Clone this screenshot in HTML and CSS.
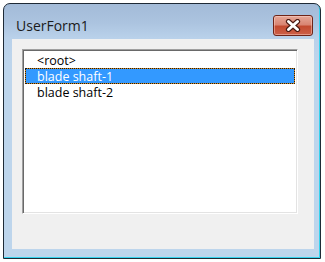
FILE: index.html
```html
<!DOCTYPE html>
<html>
<head>
<meta charset="utf-8">
<link rel="stylesheet" href="styles.css">
</head>
<body>
<div class="window">
  <div class="titlebar">
    <span class="title">UserForm1</span>
    <button class="close" aria-label="Close">
      <svg width="16" height="13" viewBox="0 0 16 13">
        <path d="M3.5 2.5 L12.5 10.5 M12.5 2.5 L3.5 10.5" stroke="#4a1a12" stroke-width="5.2" stroke-linecap="round" fill="none"/>
        <path d="M3.5 2.5 L12.5 10.5 M12.5 2.5 L3.5 10.5" stroke="#ffffff" stroke-width="3" stroke-linecap="round" fill="none"/>
      </svg>
    </button>
  </div>
  <div class="client">
    <div class="listbox">
      <div class="row">&lt;root&gt;</div>
      <div class="row selected">blade shaft-1</div>
      <div class="row">blade shaft-2</div>
    </div>
  </div>
</div>
</body>
</html>
```
FILE: styles.css
```css
html, body {
  margin: 0;
  padding: 0;
  background: #ffffff;
}
body {
  width: 325px;
  height: 262px;
  overflow: hidden;
}
.window {
  box-sizing: border-box;
  margin: 3px 0 0 3px;
  width: 318px;
  height: 256px;
  border: 1px solid #1e2a36;
  border-radius: 7px 7px 0 0;
  background: linear-gradient(#a3bbd8 0px, #abc3df 18px, #b9d1ea 34px, #bdd5ec 60px);
  box-shadow: inset -1px -1px 0 #35d3ee;
  display: flex;
  flex-direction: column;
}
.titlebar {
  height: 35px;
  display: flex;
  align-items: flex-start;
  justify-content: space-between;
  padding: 0 7px 0 12px;
}
.title {
  font-family: "Open Sans", "Noto Sans", sans-serif;
  font-size: 14px;
  line-height: 20px;
  margin-top: 12px;
  color: #1b1b1b;
}
.close {
  margin-top: 11px;
  width: 40px;
  height: 21px;
  padding: 0;
  border: 1px solid #6e2418;
  border-radius: 3px;
  background: linear-gradient(#e6a797 0%, #d98573 45%, #c34a30 55%, #cc6048 100%);
  box-shadow: inset 0 0 0 1px rgba(255, 220, 210, 0.45);
  display: flex;
  align-items: center;
  justify-content: center;
}
.close svg {
  display: block;
}
.client {
  margin: 0 6px 0 8px;
  height: 210px;
  background: #f0f0f0;
  padding: 10px 0 0 10px;
  box-sizing: border-box;
}
.listbox {
  box-sizing: border-box;
  width: 276px;
  height: 165px;
  background: #ffffff;
  border: 1px solid;
  border-color: #a0a0a0 #ffffff #ffffff #a0a0a0;
  box-shadow: inset 1px 1px 0 #696969, inset -1px -1px 0 #e3e3e3;
  padding: 2px 2px 2px 2px;
  font-family: "Open Sans", "Noto Sans", sans-serif;
  font-size: 12.5px;
  color: #000000;
}
.row {
  height: 16px;
  line-height: 16px;
  padding-left: 11px;
  border: 1px solid transparent;
  box-sizing: border-box;
  white-space: nowrap;
}
.selected {
  color: #ffffff;
  border: 1px dotted #1a1a1a;
  background: linear-gradient(#3399ff, #3399ff) padding-box, #d98a1a border-box;
}
```
